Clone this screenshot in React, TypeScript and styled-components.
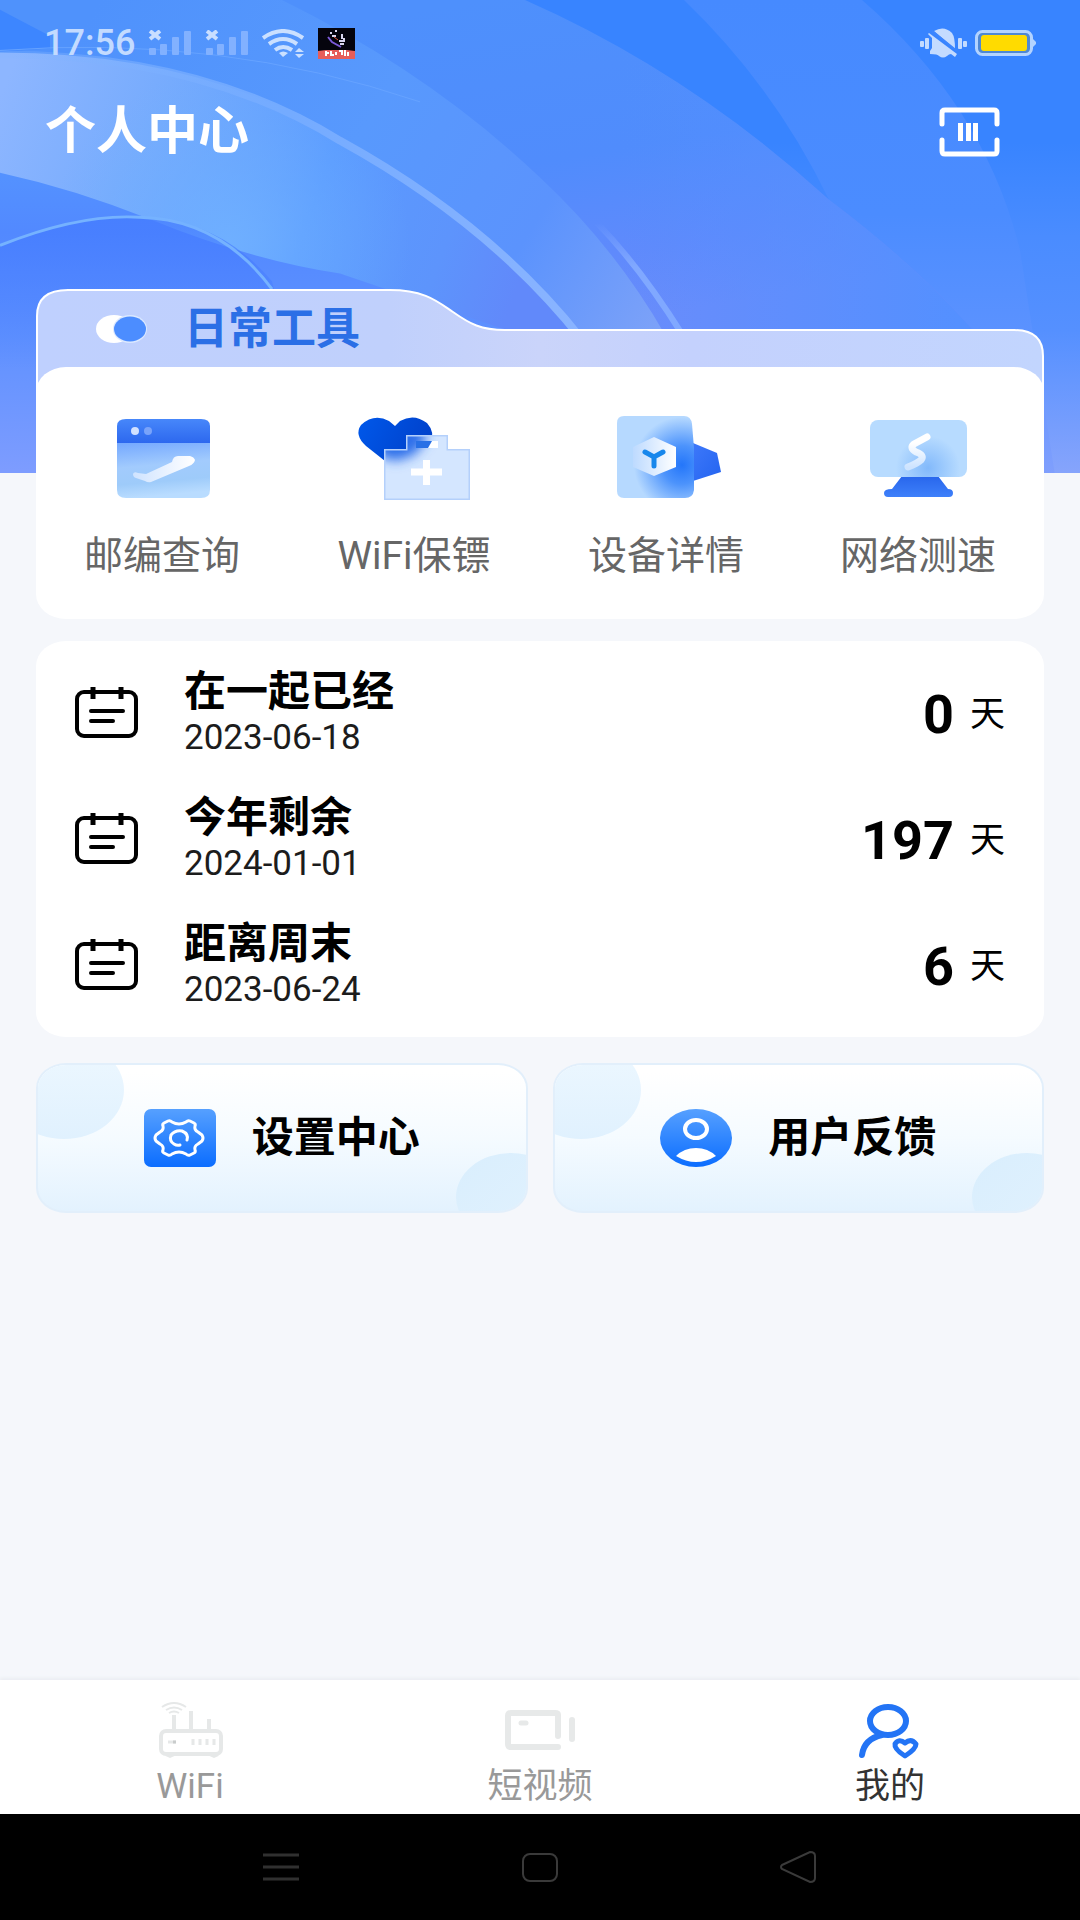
import React from 'react';
import styled, { createGlobalStyle } from 'styled-components';

const GlobalStyle = createGlobalStyle`
  *, *::before, *::after { box-sizing: border-box; }
  body {
    margin: 0;
    background: #f5f7fb;
    font-family: Roboto, "Noto Sans CJK SC", sans-serif;
    color: #000;
  }
  h1, h2, h3, p, ul { margin: 0; padding: 0; }
  ul { list-style: none; }
  button { border: 0; padding: 0; background: none; font: inherit; color: inherit; cursor: pointer; }
  a { color: inherit; text-decoration: none; }
  svg { display: block; flex: none; }
`;

const Page = styled.div`
  position: relative;
  display: flex;
  flex-direction: column;
  min-height: 100vh;
`;

const HeroArt = styled.svg`
  position: absolute;
  top: 0;
  left: 0;
  width: 100%;
  height: 473px;
`;

const Content = styled.main`
  position: relative;
  flex: 1;
  display: flex;
  flex-direction: column;
`;

const StatusBar = styled.div`
  display: flex;
  align-items: center;
  justify-content: space-between;
  height: 86px;
  padding: 0 44px;
`;

const StatusGroup = styled.div<{ $gap: number }>`
  display: flex;
  align-items: center;
  gap: ${(p) => p.$gap}px;
`;

const Clock = styled.time`
  font-size: 36px;
  font-weight: 500;
  line-height: 40px;
  color: #c3dbff;
`;

const TitleBar = styled.header`
  display: flex;
  align-items: center;
  justify-content: space-between;
  height: 92px;
  padding: 0 80px 0 45px;
`;

const PageTitle = styled.h1`
  font-size: 51px;
  line-height: 60px;
  font-weight: 700;
  color: #fff;
`;

const Body = styled.div`
  display: flex;
  flex-direction: column;
  padding: 110px 36px 24px;
`;

const ToolsSection = styled.section`
  position: relative;
`;

const FolderArt = styled.svg`
  position: absolute;
  top: 0;
  left: 0;
  width: 100%;
  height: 110px;
`;

const ToolsHeading = styled.div`
  position: relative;
  display: flex;
  align-items: center;
  gap: 36px;
  height: 79px;
  padding: 2px 60px 0;
`;

const SectionTitle = styled.h2`
  font-size: 44px;
  line-height: 52px;
  font-weight: 700;
  color: #2b6fe6;
`;

const Card = styled.div`
  position: relative;
  background: #fff;
  border-radius: 30px / 25px;
`;

const ToolGrid = styled(Card)`
  display: grid;
  grid-template-columns: repeat(4, 1fr);
  padding: 43px 0 39px;
`;

const Tool = styled.button`
  display: flex;
  flex-direction: column;
  align-items: center;
  gap: 27px;
  font-size: 39px;
  line-height: 48px;
  color: #666;
`;

const DayList = styled(Card).attrs({ as: 'ul' })`
  margin-top: 22px;
  padding: 9px 39px;
`;

const DayRow = styled.li`
  display: flex;
  align-items: center;
  height: 126px;
`;

const DayText = styled.div`
  flex: 1;
  padding: 0 0 4px 46px;
`;

const DayTitle = styled.h3`
  font-size: 42px;
  line-height: 54px;
  font-weight: 700;
`;

const DayDate = styled.p`
  font-size: 35px;
  line-height: 38px;
  color: #1c1c1c;
`;

const DayCount = styled.p`
  display: flex;
  align-items: center;
  gap: 16px;
  padding-top: 4px;
`;

const Count = styled.strong`
  font-size: 54px;
  line-height: 56px;
  font-weight: 700;
`;

const Unit = styled.span`
  font-size: 35px;
  line-height: 42px;
`;

const Actions = styled.div`
  display: grid;
  grid-template-columns: 1fr 1fr;
  gap: 25px;
  margin-top: 26px;
`;

const Action = styled.button`
  position: relative;
  display: flex;
  align-items: center;
  justify-content: center;
  gap: 36px;
  height: 150px;
  overflow: hidden;
  border: 2px solid #e2effb;
  border-radius: 30px / 25px;
  background: linear-gradient(#ffffff 5%, #f5fbff 50%, #e3f2fe);
  font-size: 42px;
  line-height: 50px;
  font-weight: 700;

  &::before, &::after {
    content: '';
    position: absolute;
    border-radius: 50%;
  }
  &::before {
    left: -34px;
    top: -24px;
    width: 120px;
    height: 98px;
    background: linear-gradient(#eef8ff, #e0f1fe);
  }
  &::after {
    right: -40px;
    bottom: -30px;
    width: 110px;
    height: 88px;
    background: linear-gradient(135deg, #d9eefd, #e2f2fe);
  }
`;

const TabBar = styled.nav`
  position: relative;
  display: grid;
  grid-template-columns: repeat(3, 1fr);
  height: 134px;
  padding: 20px 15px 6px;
  background: #fff;
  box-shadow: 0 -2px 3px #ebeef2;
`;

const Tab = styled.a<{ $active?: boolean }>`
  display: flex;
  flex-direction: column;
  align-items: center;
  gap: 6px;
  font-size: 35px;
  line-height: 42px;
  color: ${(p) => (p.$active ? '#333' : '#999')};
`;

const SystemNav = styled.div`
  position: relative;
  display: grid;
  grid-template-columns: repeat(3, 24%);
  justify-content: center;
  height: 106px;
  background: #000;
`;

const SystemButton = styled.button`
  display: flex;
  align-items: center;
  justify-content: center;
`;

function HeroBackground() {
  return (
    <HeroArt viewBox="0 0 1080 473" preserveAspectRatio="none" aria-hidden="true">
      <defs>
        <linearGradient id="base" x1="0" y1="0" x2="0" y2="1">
          <stop offset="0" stopColor="#3884ff" />
          <stop offset="0.3" stopColor="#3884ff" />
          <stop offset="0.5" stopColor="#4a8cff" />
          <stop offset="0.7" stopColor="#5590ff" />
          <stop offset="1" stopColor="#86a4fc" />
        </linearGradient>
        <linearGradient id="wing" x1="0" y1="0" x2="0" y2="1">
          <stop offset="0" stopColor="#468aff" />
          <stop offset="0.45" stopColor="#4b8cff" />
          <stop offset="0.7" stopColor="#5b92ff" />
          <stop offset="1" stopColor="#809ffd" />
        </linearGradient>
        <linearGradient id="mid" gradientUnits="userSpaceOnUse" x1="480" y1="0" x2="540" y2="345">
          <stop offset="0" stopColor="#4e90fc" />
          <stop offset="0.5" stopColor="#508cfc" />
          <stop offset="0.8" stopColor="#5f8afc" />
          <stop offset="1" stopColor="#6a8cfb" />
        </linearGradient>
        <linearGradient id="midFade" gradientUnits="userSpaceOnUse" x1="620" y1="0" x2="960" y2="0">
          <stop offset="0" stopColor="#5490ff" stopOpacity="0" />
          <stop offset="1" stopColor="#5490ff" />
        </linearGradient>
        <linearGradient id="band" gradientUnits="userSpaceOnUse" x1="100" y1="0" x2="660" y2="340">
          <stop offset="0" stopColor="#4f92fc" />
          <stop offset="0.45" stopColor="#5899fd" />
          <stop offset="0.75" stopColor="#5b93fd" />
          <stop offset="1" stopColor="#7da2f8" />
        </linearGradient>
        <linearGradient id="light" gradientUnits="userSpaceOnUse" x1="0" y1="100" x2="520" y2="290">
          <stop offset="0" stopColor="#8db6ff" />
          <stop offset="0.28" stopColor="#76abfd" />
          <stop offset="0.6" stopColor="#5a9bff" />
          <stop offset="0.85" stopColor="#5d94fc" />
          <stop offset="1" stopColor="#6189fa" />
        </linearGradient>
        <radialGradient id="glow" gradientUnits="userSpaceOnUse" cx="230" cy="250" r="180">
          <stop offset="0" stopColor="#70b1ff" stopOpacity="0.9" />
          <stop offset="0.4" stopColor="#70b1ff" stopOpacity="0.5" />
          <stop offset="1" stopColor="#70b1ff" stopOpacity="0" />
        </radialGradient>
        <linearGradient id="low" gradientUnits="userSpaceOnUse" x1="0" y1="178" x2="0" y2="485">
          <stop offset="0" stopColor="#5492ff" />
          <stop offset="0.2" stopColor="#5289ff" />
          <stop offset="0.55" stopColor="#5f91ff" />
          <stop offset="1" stopColor="#7d9cff" />
        </linearGradient>
        <linearGradient id="disk" gradientUnits="userSpaceOnUse" x1="0" y1="224" x2="0" y2="380">
          <stop offset="0" stopColor="#447bff" stopOpacity="0.75" />
          <stop offset="1" stopColor="#447bff" stopOpacity="0" />
        </linearGradient>
        <linearGradient id="line" x1="0" y1="0" x2="1" y2="0">
          <stop offset="0" stopColor="#84b5ff" stopOpacity="0.2" />
          <stop offset="0.5" stopColor="#74abff" />
          <stop offset="1" stopColor="#8ab4ff" />
        </linearGradient>
        <linearGradient id="trail" gradientUnits="userSpaceOnUse" x1="0" y1="230" x2="0" y2="320">
          <stop offset="0" stopColor="#80a8ff" stopOpacity="0" />
          <stop offset="0.5" stopColor="#80a8ff" />
        </linearGradient>
      </defs>
      <rect width="1080" height="473" fill="url(#base)" />
      <g transform="scale(1 0.97)">
        <path d="M684 0H862Q985 110 1020 258L1055 490H600L829 206Q775 90 684 0Z" fill="url(#wing)" />
        <path d="M0 0H525Q690 75 829 206Q950 300 1020 400V490H0Z" fill="url(#mid)" />
        <path d="M0 0H525Q690 75 829 206Q950 300 1020 400V490H0Z" fill="url(#midFade)" />
        <path d="M0 0H282Q430 75 540 183Q615 255 665 345V490H0Z" fill="url(#band)" />
        <path d="M597 230Q640 275 683 346" fill="none" stroke="url(#trail)" strokeWidth="6" />
        <path d="M0 10L50 37V50L0 53Z" fill="#3d86ff" />
        <path d="M0 52Q220 35 420 105" fill="none" stroke="#66a3ff" strokeWidth="1" />
        <path d="M0 54Q200 54 345 145Q490 230 585 350V490H0Z" fill="url(#light)" />
        <path d="M0 54Q200 54 345 145Q490 230 585 350V490H0Z" fill="url(#glow)" />
        <path d="M0 56Q200 56 340 145Q490 230 582 350" fill="none" stroke="url(#line)" strokeWidth="8" />
        <path d="M0 178Q75 195 150 226Q250 268 340 282L520 345V490H0Z" fill="url(#low)" />
        <path d="M0 253Q80 220 140 224Q220 226 272 290L300 400H0Z" fill="url(#disk)" />
        <path d="M0 253Q80 220 140 224Q220 226 272 298" fill="none" stroke="#75b2ff" strokeWidth="3" />
      </g>
    </HeroArt>
  );
}

function Signal() {
  return (
    <svg width="44" height="26" viewBox="0 0 44 26" aria-hidden="true">
      <g fill="#82b1ff">
        <rect x="1" y="18" width="7" height="7" rx="1" />
        <rect x="12" y="14" width="7" height="11" rx="1" />
        <rect x="24" y="7" width="7" height="18" rx="1" />
        <rect x="36" y="1" width="7" height="24" rx="1" />
      </g>
      <path d="M2 1L12 9M12 1L2 9" stroke="#c9deff" strokeWidth="4" />
    </svg>
  );
}

function WifiMark() {
  return (
    <svg width="43" height="29" viewBox="0 0 43 29" fill="none" aria-hidden="true">
      <g stroke="#cbe0ff" strokeWidth="4">
        <path d="M1 9Q21 -5 41 9" />
        <path d="M7 15Q21 5 35 15" />
        <path d="M13 21Q21 15 30 21" />
      </g>
      <path d="M17 24Q21 21 26 24L21 28ZM33 23L37 19L42 23ZM33 25H42L37 29Z" fill="#cbe0ff" />
    </svg>
  );
}

function AppBadge() {
  return (
    <svg width="37" height="31" viewBox="0 0 37 31" aria-hidden="true">
      <rect width="37" height="31" fill="#05040d" />
      <path d="M10 9L14 14L23 19" fill="none" stroke="#7b5ad8" strokeWidth="2" />
      <path d="M12 5h2M17 3h2M14 8h4M24 6v5M21 13h6M22 16h4M26 10v2" stroke="#d9d5ee" strokeWidth="2" />
      <path d="M16 9l4 3" stroke="#e0563c" strokeWidth="1" />
      <path d="M0 23L8 22H29L37 23V31H0Z" fill="#e75d59" />
      <path d="M7 25h4M8 23v5M13 23v4h3M18 24v3M21 23h3v4M27 22v6M30 24v4" fill="none" stroke="#fff" strokeWidth="2" />
    </svg>
  );
}

function SilentBell() {
  return (
    <svg width="47" height="30" viewBox="0 0 47 30" aria-hidden="true">
      <g fill="#c4dbff">
        <path d="M14 3Q24 -3 32 5Q35 9 35 21Z" />
        <path d="M9 5L37 26L35 29L31 26Q29 26 27 28Q23 31 19 28Q18 26 10 26V23L12 20V10L8 6Z" />
        <rect y="13" width="4" height="6" rx="1" />
        <rect x="5" y="10" width="4" height="11" rx="1" />
        <rect x="38" y="10" width="4" height="11" rx="1" />
        <rect x="43" y="13" width="4" height="6" rx="1" />
      </g>
      <path d="M12 3L37 23" stroke="#3d86ff" strokeWidth="2" />
    </svg>
  );
}

function Battery() {
  return (
    <svg width="61" height="26" viewBox="0 0 61 26" aria-hidden="true">
      <rect x="1.5" y="1.5" width="55" height="23" rx="6" fill="#4f88d4" stroke="#b3d3ff" strokeWidth="3" />
      <rect x="6" y="5" width="46" height="16" rx="3" fill="#ffdb00" />
      <path d="M58 9L61 12V14L58 17Z" fill="#b3d3ff" />
    </svg>
  );
}

function ScanIcon() {
  return (
    <svg width="61" height="50" viewBox="0 0 61 50" fill="none" aria-hidden="true">
      <path
        d="M3 17V6Q3 3 6 3H55Q58 3 58 6V17M3 33V44Q3 47 6 47H55Q58 47 58 44V33"
        stroke="#fff"
        strokeWidth="5"
        strokeLinecap="round"
      />
      <path d="M19 16H24V34H19ZM27 16H32V34H27ZM34 16H39V34H34Z" fill="#fff" />
    </svg>
  );
}

function FolderShape() {
  const edge = 'M1 110V28Q1 2 32 2H354C389 2 402 14 417 24C434 36 445 42 469 42H978Q1007 42 1007 68V110';
  return (
    <FolderArt viewBox="0 0 1008 110" preserveAspectRatio="none" aria-hidden="true">
      <defs>
        <linearGradient id="folder" x1="0" y1="0" x2="1" y2="0">
          <stop offset="0" stopColor="#bfd0fe" />
          <stop offset="0.35" stopColor="#c0d0fc" />
          <stop offset="0.5" stopColor="#cad4fa" />
          <stop offset="0.65" stopColor="#c4d1fd" />
          <stop offset="1" stopColor="#c2d5fe" />
        </linearGradient>
      </defs>
      <path d={edge} fill="url(#folder)" stroke="#fff" strokeWidth="2" />
    </FolderArt>
  );
}

function SwitchMark() {
  return (
    <svg width="52" height="28" viewBox="0 0 52 28" aria-hidden="true">
      <ellipse cx="18" cy="14" rx="18" ry="14" fill="#fff" />
      <ellipse cx="34" cy="14" rx="17" ry="14" fill="#dbe8ff" />
      <ellipse cx="34" cy="14" rx="16" ry="12.5" fill="#4c8dff" />
    </svg>
  );
}

function PostcodeIcon() {
  return (
    <svg width="120" height="95" viewBox="0 0 120 95" aria-hidden="true">
      <defs>
        <linearGradient id="pcHead" x1="0" y1="0" x2="0" y2="1">
          <stop offset="0" stopColor="#4787fa" />
          <stop offset="1" stopColor="#2d68ee" />
        </linearGradient>
        <linearGradient id="pcBody" x1="0" y1="0" x2="0.15" y2="1">
          <stop offset="0" stopColor="#74a8ff" />
          <stop offset="0.45" stopColor="#a2cbfd" />
          <stop offset="0.75" stopColor="#9ecbfa" />
          <stop offset="1" stopColor="#b9dcff" />
        </linearGradient>
        <linearGradient id="pcMark" x1="0" y1="0" x2="1" y2="0">
          <stop offset="0" stopColor="#cfe3ff" />
          <stop offset="1" stopColor="#fff" />
        </linearGradient>
      </defs>
      <path d="M15 33V16Q15 9 24 9H99Q108 9 108 16V33Z" fill="url(#pcHead)" />
      <path d="M15 33H108V80Q108 88 99 88H24Q15 88 15 80Z" fill="url(#pcBody)" />
      <circle cx="33" cy="21" r="4" fill="#d2e1ff" />
      <circle cx="46" cy="21" r="4" fill="#79a3fa" />
      <path
        d="M31 64Q32 61 36 63L44 64L70 52Q71 46 76 46H88Q92 47 93 50Q92 54 87 56L49 72Q46 73 43 71L34 68Q31 67 31 64Z"
        fill="url(#pcMark)"
      />
    </svg>
  );
}

function GuardIcon() {
  return (
    <svg width="120" height="95" viewBox="0 0 120 95" aria-hidden="true">
      <defs>
        <linearGradient id="heart" x1="0" y1="0" x2="1" y2="0.3">
          <stop offset="0" stopColor="#0058ea" />
          <stop offset="1" stopColor="#0042cc" />
        </linearGradient>
        <clipPath id="bagClip">
          <path d="M30 39H52V25H94V39H116V90H30Z" />
        </clipPath>
        <filter id="soft" x="-50%" y="-50%" width="200%" height="200%">
          <feGaussianBlur stdDeviation="6" />
        </filter>
      </defs>
      <path d="M31 51L12 36Q0 25 7 15Q20 3 35 11L41 16L46 11Q60 3 73 13Q82 23 76 34L56 51Z" fill="url(#heart)" />
      <path d="M30 39H52V25H94V39H116V90H30Z" fill="#d4e6ff" />
      <g clipPath="url(#bagClip)">
        <path d="M22 16H64L74 28L60 45L42 51L24 46Z" fill="#2e70ea" filter="url(#soft)" />
        <path d="M30 39H52V25H94V39H116V90H30Z" fill="none" stroke="#b4d0fb" strokeWidth="3" />
      </g>
      <path d="M62 31H84V38H62Z" fill="#fff" />
      <path d="M62 31H78L74 38H62Z" fill="#2870e6" />
      <path d="M57 62H88M72.5 50V75" stroke="#fff" strokeWidth="7" />
    </svg>
  );
}

function DeviceIcon() {
  return (
    <svg width="120" height="95" viewBox="0 0 120 95" aria-hidden="true">
      <defs>
        <radialGradient id="devGlow" gradientUnits="userSpaceOnUse" cx="76" cy="55" r="48">
          <stop offset="0" stopColor="#2476fa" />
          <stop offset="0.4" stopColor="#4c93fc" />
          <stop offset="1" stopColor="#b6d9ff" />
        </radialGradient>
        <linearGradient id="devSide" x1="0" y1="0" x2="1" y2="1">
          <stop offset="0" stopColor="#3d78fa" />
          <stop offset="1" stopColor="#2464f0" />
        </linearGradient>
        <linearGradient id="devHex" x1="1" y1="0" x2="0" y2="0">
          <stop offset="0" stopColor="#fff" />
          <stop offset="1" stopColor="#bddaff" />
        </linearGradient>
      </defs>
      <path d="M87 33L111 43L115 62L87 71Z" fill="url(#devSide)" />
      <path d="M18 6H78Q85 6 86 14L88 38V80Q87 88 79 88H18Q11 88 11 81V13Q11 6 18 6Z" fill="url(#devGlow)" />
      <path d="M48 27L70 37V57L48 66L27 57V37Z" fill="url(#devHex)" />
      <path d="M39 42L48 47L57 42M48 47V56" fill="none" stroke="#1787ec" strokeWidth="5" strokeLinecap="round" />
    </svg>
  );
}

function SpeedIcon() {
  return (
    <svg width="120" height="95" viewBox="0 0 120 95" aria-hidden="true">
      <defs>
        <radialGradient id="scrGlow" gradientUnits="userSpaceOnUse" cx="70" cy="58" r="32">
          <stop offset="0" stopColor="#82b9fb" />
          <stop offset="1" stopColor="#b7dbff" />
        </radialGradient>
        <linearGradient id="scrMark" x1="0" y1="1" x2="0" y2="0">
          <stop offset="0" stopColor="#cee4ff" />
          <stop offset="0.8" stopColor="#fff" />
        </linearGradient>
        <linearGradient id="stand" x1="0" y1="0" x2="0" y2="1">
          <stop offset="0" stopColor="#2866ec" />
          <stop offset="1" stopColor="#3e80fa" />
        </linearGradient>
      </defs>
      <path d="M44 66H80L90 79Q95 79 95 83Q95 87 91 87H30Q26 87 26 83Q26 79 34 79Z" fill="url(#stand)" />
      <rect x="12" y="10" width="97" height="57" rx="8" fill="url(#scrGlow)" />
      <path
        d="M69 27L56 34Q51 38 58 42Q67 45 63 50Q60 53 50 57"
        fill="none"
        stroke="url(#scrMark)"
        strokeWidth="7"
        strokeLinecap="round"
        strokeLinejoin="round"
      />
    </svg>
  );
}

function CalendarIcon() {
  return (
    <svg width="63" height="52" viewBox="0 0 63 52" fill="none" aria-hidden="true">
      <rect x="2" y="5" width="59" height="44" rx="7" stroke="#000" strokeWidth="4" />
      <path d="M18 0V12M46 0V12" stroke="#000" strokeWidth="5" />
      <path d="M16 24H48M16 34H38" stroke="#000" strokeWidth="4" strokeLinecap="round" />
    </svg>
  );
}

function GearIcon() {
  return (
    <svg width="72" height="58" viewBox="0 0 72 58" fill="none" aria-hidden="true">
      <defs>
        <linearGradient id="gearBg" x1="0" y1="0" x2="0" y2="1">
          <stop offset="0" stopColor="#56a0ff" />
          <stop offset="1" stopColor="#0b6dff" />
        </linearGradient>
      </defs>
      <rect width="72" height="58" rx="7" fill="url(#gearBg)" />
      <path
        d="M24 12Q26 11 28 13Q35 17 42 13Q44 11 46 12L50 14Q52 15 51 17Q50 21 54 23L58 26Q60 29 58 32L54 35Q50 37 51 41Q52 43 50 44L46 46Q44 47 42 45Q35 41 28 45Q26 47 24 46L20 44Q18 43 19 41Q20 37 16 35L12 32Q10 29 12 26L16 23Q20 21 19 17Q18 15 20 14Z"
        stroke="#fff"
        strokeWidth="3"
        strokeLinejoin="round"
      />
      <path d="M43 31Q45 25 38 22Q31 21 27 26Q25 32 30 35Q33 37 36 36" stroke="#fff" strokeWidth="3" strokeLinecap="round" />
    </svg>
  );
}

function UserIcon() {
  return (
    <svg width="72" height="58" viewBox="0 0 72 58" fill="none" aria-hidden="true">
      <defs>
        <linearGradient id="userBg" x1="0" y1="0" x2="0" y2="1">
          <stop offset="0" stopColor="#56a0ff" />
          <stop offset="1" stopColor="#0b6dff" />
        </linearGradient>
      </defs>
      <ellipse cx="36" cy="29" rx="36" ry="29" fill="url(#userBg)" />
      <ellipse cx="36" cy="20" rx="11" ry="9" stroke="#fff" strokeWidth="4" />
      <path d="M16 47Q24 39 36 39Q48 39 56 47Q46 53 36 53Q26 53 16 47Z" fill="#fff" />
    </svg>
  );
}

function RouterIcon() {
  return (
    <svg width="72" height="60" viewBox="0 0 72 60" fill="none" aria-hidden="true">
      <g stroke="#e6e8e8">
        <path d="M8 7Q20 -1 32 7M12 10Q20 5 28 10M15 13Q20 10 25 13" strokeWidth="2" />
        <path d="M20 15V30M37 11V30M55 19V30" strokeWidth="4" />
        <rect x="7" y="31" width="60" height="23" rx="5" strokeWidth="4" />
        <path d="M12 55L16 57L20 55M56 55L60 57L64 55" strokeWidth="2" />
        <path d="M39 39V45M46 39V45M53 39V45M60 39V45" strokeWidth="3" />
        <path d="M14 42H22" strokeWidth="3" />
      </g>
      <path d="M19 42H22" stroke="#c9cccc" strokeWidth="3" />
    </svg>
  );
}

function VideoIcon() {
  return (
    <svg width="72" height="60" viewBox="0 0 72 60" fill="none" stroke="#e7e9e9" strokeLinecap="round" aria-hidden="true">
      <path d="M54 36V15Q54 13 51 13H7Q4 13 4 16V44Q4 47 7 47H54" strokeWidth="6" />
      <path d="M68 20V39" strokeWidth="6" />
      <path d="M17 23H22" strokeWidth="5" />
    </svg>
  );
}

function ProfileIcon() {
  return (
    <svg width="72" height="60" viewBox="0 0 72 60" fill="none" stroke="#2374f5" strokeLinecap="round" strokeLinejoin="round" aria-hidden="true">
      <ellipse cx="34" cy="21" rx="18" ry="14" strokeWidth="6" />
      <path d="M28 35Q10 39 8 55" strokeWidth="6" />
      <path d="M51 56Q40 49 41 44Q45 38 51 43Q57 38 62 44Q62 49 51 56Z" strokeWidth="5" />
    </svg>
  );
}

function MenuGlyph() {
  return (
    <svg width="36" height="30" viewBox="0 0 36 30" aria-hidden="true">
      <path d="M0 3H36M0 15H36M0 27H36" stroke="#303030" strokeWidth="3" />
    </svg>
  );
}

function HomeGlyph() {
  return (
    <svg width="36" height="30" viewBox="0 0 36 30" aria-hidden="true">
      <rect x="1" y="2" width="34" height="27" rx="7" fill="none" stroke="#3a3a3a" strokeWidth="2" />
    </svg>
  );
}

function BackGlyph() {
  return (
    <svg width="38" height="32" viewBox="0 0 38 32" aria-hidden="true">
      <path d="M2 14L30 1Q35 1 35 5V27Q35 31 30 31L2 18Q0 16 2 14Z" fill="none" stroke="#3a3a3a" strokeWidth="2" />
    </svg>
  );
}

const tools = [
  { label: '邮编查询', Icon: PostcodeIcon },
  { label: 'WiFi保镖', Icon: GuardIcon },
  { label: '设备详情', Icon: DeviceIcon },
  { label: '网络测速', Icon: SpeedIcon },
];

const days = [
  { title: '在一起已经', date: '2023-06-18', count: 0 },
  { title: '今年剩余', date: '2024-01-01', count: 197 },
  { title: '距离周末', date: '2023-06-24', count: 6 },
];

export default function App() {
  return (
    <>
      <GlobalStyle />
      <Page>
        <HeroBackground />
        <Content>
          <StatusBar>
            <StatusGroup $gap={13}>
              <Clock>17:56</Clock>
              <Signal />
              <Signal />
              <WifiMark />
              <AppBadge />
            </StatusGroup>
            <StatusGroup $gap={8}>
              <SilentBell />
              <Battery />
            </StatusGroup>
          </StatusBar>
          <TitleBar>
            <PageTitle>个人中心</PageTitle>
            <button type="button" aria-label="扫一扫">
              <ScanIcon />
            </button>
          </TitleBar>
          <Body>
            <ToolsSection>
              <FolderShape />
              <ToolsHeading>
                <SwitchMark />
                <SectionTitle>日常工具</SectionTitle>
              </ToolsHeading>
              <ToolGrid>
                {tools.map(({ label, Icon }) => (
                  <Tool type="button" key={label}>
                    <Icon />
                    <span>{label}</span>
                  </Tool>
                ))}
              </ToolGrid>
            </ToolsSection>
            <DayList>
              {days.map((d) => (
                <DayRow key={d.title}>
                  <CalendarIcon />
                  <DayText>
                    <DayTitle>{d.title}</DayTitle>
                    <DayDate>{d.date}</DayDate>
                  </DayText>
                  <DayCount>
                    <Count>{d.count}</Count>
                    <Unit>天</Unit>
                  </DayCount>
                </DayRow>
              ))}
            </DayList>
            <Actions>
              <Action type="button">
                <GearIcon />
                <span>设置中心</span>
              </Action>
              <Action type="button">
                <UserIcon />
                <span>用户反馈</span>
              </Action>
            </Actions>
          </Body>
        </Content>
        <TabBar>
          <Tab href="#wifi">
            <RouterIcon />
            <span>WiFi</span>
          </Tab>
          <Tab href="#video">
            <VideoIcon />
            <span>短视频</span>
          </Tab>
          <Tab href="#me" $active aria-current="page">
            <ProfileIcon />
            <span>我的</span>
          </Tab>
        </TabBar>
        <SystemNav>
          <SystemButton type="button" aria-label="菜单">
            <MenuGlyph />
          </SystemButton>
          <SystemButton type="button" aria-label="主页">
            <HomeGlyph />
          </SystemButton>
          <SystemButton type="button" aria-label="返回">
            <BackGlyph />
          </SystemButton>
        </SystemNav>
      </Page>
    </>
  );
}
